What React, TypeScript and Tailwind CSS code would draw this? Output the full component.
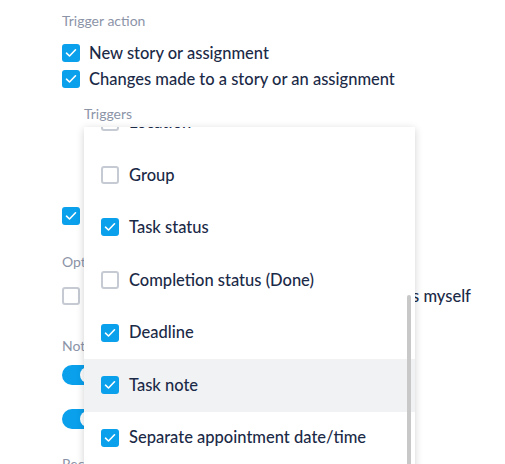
import React from "react";

const font = { fontFamily: "Lato, 'Liberation Sans', sans-serif" };

function Check({ checked }: { checked: boolean }) {
  if (!checked) {
    return (
      <span className="block h-[18px] w-[18px] shrink-0 rounded-[3px] border-2 border-[#c6cad3] bg-white" />
    );
  }
  return (
    <span className="flex h-[18px] w-[18px] shrink-0 items-center justify-center rounded-[3px] bg-[#0aa0ec]">
      <svg width="12" height="10" viewBox="0 0 12 10" fill="none">
        <path d="M1.5 5.2 4.5 8 10.5 1.8" stroke="white" strokeWidth="1.6" strokeLinecap="round" strokeLinejoin="round" />
      </svg>
    </span>
  );
}

function Toggle() {
  return (
    <span className="flex h-5 w-9 items-center justify-end rounded-full bg-[#0aa0ec] px-[2px]">
      <span className="h-4 w-4 rounded-full bg-white" />
    </span>
  );
}

const triggers = [
  { label: "Location", checked: false },
  { label: "Group", checked: false },
  { label: "Task status", checked: true },
  { label: "Completion status (Done)", checked: false },
  { label: "Deadline", checked: true },
  { label: "Task note", checked: true, hover: true },
  { label: "Separate appointment date/time", checked: true },
  { label: "Attachments", checked: false },
];

export default function App() {
  return (
    <div className="relative h-[464px] w-[505px] overflow-hidden bg-white font-medium text-[#1b2a47]" style={font}>
      <div className="pl-[62px] pt-[11px]">
        <div className="text-[14px] font-normal leading-5 text-[#8c94a8]">Trigger action</div>

        <div className="mt-[9px] flex h-[26px] items-center gap-[9px] text-[16.5px]">
          <Check checked />
          <span>New story or assignment</span>
        </div>
        <div className="flex h-[26px] items-center gap-[9px] text-[16.5px]">
          <Check checked />
          <span>Changes made to a story or an assignment</span>
        </div>

        <div className="pl-[22px] pt-[12px]">
          <div className="text-[14px] font-normal leading-5 text-[#8c94a8]">Triggers</div>
          <div className="mt-[4px] h-[40px] w-[300px] rounded border border-[#d6d9e0]" />
        </div>

        <div className="mt-[35px] flex h-[26px] items-center gap-[9px] text-[16.5px]">
          <Check checked />
          <span>Only for my own stories</span>
        </div>

        <div className="mt-[23px] text-[14px] font-normal leading-5 text-[#8c94a8]">Options</div>
        <div className="mt-[11px] flex h-[26px] items-center gap-[9px] text-[16.5px]">
          <Check checked={false} />
          <span>Don't notify me about changes made to items myself</span>
        </div>

        <div className="mt-[27px] text-[14px] font-normal leading-5 text-[#8c94a8]">Notifications</div>
        <div className="mt-[7px] flex items-center gap-3 text-[16.5px]">
          <Toggle />
          <span>Email</span>
        </div>
        <div className="mt-[19px] flex items-center gap-3 text-[16.5px]">
          <Toggle />
          <span>Push notification</span>
        </div>
        <div className="mt-[22px] text-[14px] font-normal leading-5 text-[#8c94a8]">Recipients</div>
      </div>

      {/* open triggers dropdown */}
      <div className="absolute left-[84px] top-[127px] h-[360px] w-[331px] overflow-hidden bg-white shadow-[0_2px_8px_rgba(0,0,0,0.18)]">
        <div className="-mt-[31px]">
          {triggers.map((t) => (
            <div
              key={t.label}
              className={`flex h-[52.6px] items-center gap-[10px] pl-[17px] text-[16.5px] ${t.hover ? "bg-[#f1f2f4]" : ""}`}
            >
              <Check checked={t.checked} />
              <span>{t.label}</span>
            </div>
          ))}
        </div>
        <div className="absolute right-[4px] top-[168px] h-[220px] w-[4px] rounded-t-full bg-[#c8c8c8]" />
      </div>
    </div>
  );
}
